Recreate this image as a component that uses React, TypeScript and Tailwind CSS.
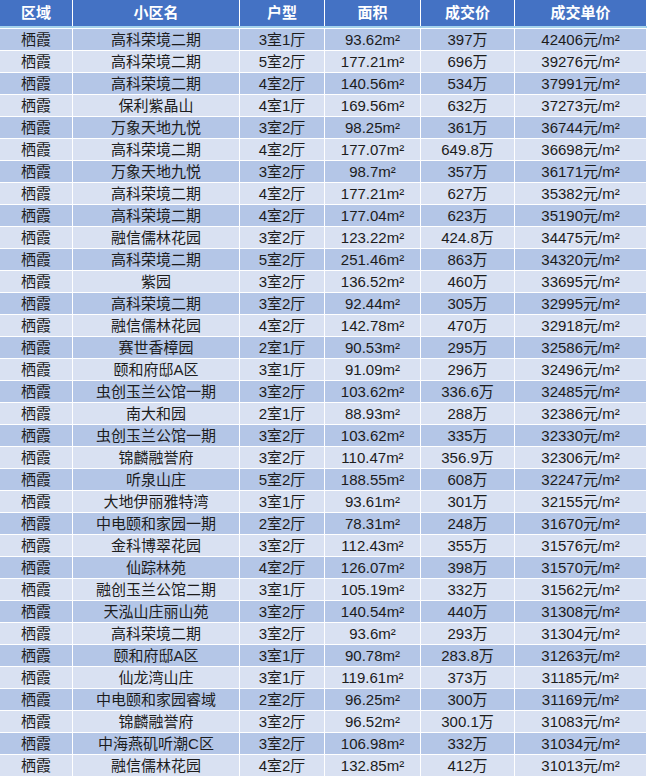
import React from "react";

////DATA
const headers = ["区域", "小区名", "户型", "面积", "成交价", "成交单价"];

// [小区名, 户型, 面积, 成交价, 成交单价]
const rows: [string, string, string, string, string][] = [
  ["高科荣境二期", "3室1厅", "93.62", "397", "42406"],
  ["高科荣境二期", "5室2厅", "177.21", "696", "39276"],
  ["高科荣境二期", "4室2厅", "140.56", "534", "37991"],
  ["保利紫晶山", "4室1厅", "169.56", "632", "37273"],
  ["万象天地九悦", "3室2厅", "98.25", "361", "36744"],
  ["高科荣境二期", "4室2厅", "177.07", "649.8", "36698"],
  ["万象天地九悦", "3室2厅", "98.7", "357", "36171"],
  ["高科荣境二期", "4室2厅", "177.21", "627", "35382"],
  ["高科荣境二期", "4室2厅", "177.04", "623", "35190"],
  ["融信儒林花园", "3室2厅", "123.22", "424.8", "34475"],
  ["高科荣境二期", "5室2厅", "251.46", "863", "34320"],
  ["紫园", "3室2厅", "136.52", "460", "33695"],
  ["高科荣境二期", "3室2厅", "92.44", "305", "32995"],
  ["融信儒林花园", "4室2厅", "142.78", "470", "32918"],
  ["赛世香樟园", "2室1厅", "90.53", "295", "32586"],
  ["颐和府邸A区", "3室1厅", "91.09", "296", "32496"],
  ["虫创玉兰公馆一期", "3室2厅", "103.62", "336.6", "32485"],
  ["南大和园", "2室1厅", "88.93", "288", "32386"],
  ["虫创玉兰公馆一期", "3室2厅", "103.62", "335", "32330"],
  ["锦麟融誉府", "3室2厅", "110.47", "356.9", "32306"],
  ["听泉山庄", "5室2厅", "188.55", "608", "32247"],
  ["大地伊丽雅特湾", "3室1厅", "93.61", "301", "32155"],
  ["中电颐和家园一期", "2室2厅", "78.31", "248", "31670"],
  ["金科博翠花园", "3室2厅", "112.43", "355", "31576"],
  ["仙踪林苑", "4室2厅", "126.07", "398", "31570"],
  ["融创玉兰公馆二期", "3室1厅", "105.19", "332", "31562"],
  ["天泓山庄丽山苑", "3室2厅", "140.54", "440", "31308"],
  ["高科荣境二期", "3室2厅", "93.6", "293", "31304"],
  ["颐和府邸A区", "3室1厅", "90.78", "283.8", "31263"],
  ["仙龙湾山庄", "3室1厅", "119.61", "373", "31185"],
  ["中电颐和家园睿域", "2室2厅", "96.25", "300", "31169"],
  ["锦麟融誉府", "3室2厅", "96.52", "300.1", "31083"],
  ["中海燕矶听潮C区", "3室2厅", "106.98", "332", "31034"],
  ["融信儒林花园", "4室2厅", "132.85", "412", "31013"],
];

const cols = "grid grid-cols-[72px_166px_84px_95px_93px_131px] gap-x-px";

const App = () => {
  ////UI
  return (
    <div className="w-[647px] h-[777px] bg-white overflow-hidden font-['Liberation_Sans','Noto_Sans_CJK_SC',sans-serif]">
      {/* header */}
      <div className={`${cols} border-b-2 border-[#a6d3ec]`}>
        {headers.map((h) => (
          <div
            key={h}
            className="h-[26px] bg-[#4472c4] text-white font-bold text-[15px] flex items-center justify-center"
          >
            {h}
          </div>
        ))}
      </div>
      {/* body */}
      <div className="flex flex-col gap-y-px pt-px">
        {rows.map((r, i) => {
          const bg = i % 2 === 0 ? "bg-[#b4c6e7]" : "bg-[#d9e1f2]";
          const cells = ["栖霞", r[0], r[1], `${r[2]}m²`, `${r[3]}万`, `${r[4]}元/m²`];
          return (
            <div key={i} className={cols}>
              {cells.map((c, j) => (
                <div
                  key={j}
                  className={`h-[21px] ${bg} text-[#1c1c1c] text-[15px] leading-none flex items-center justify-center`}
                >
                  {c}
                </div>
              ))}
            </div>
          );
        })}
      </div>
    </div>
  );
};

export default App;
